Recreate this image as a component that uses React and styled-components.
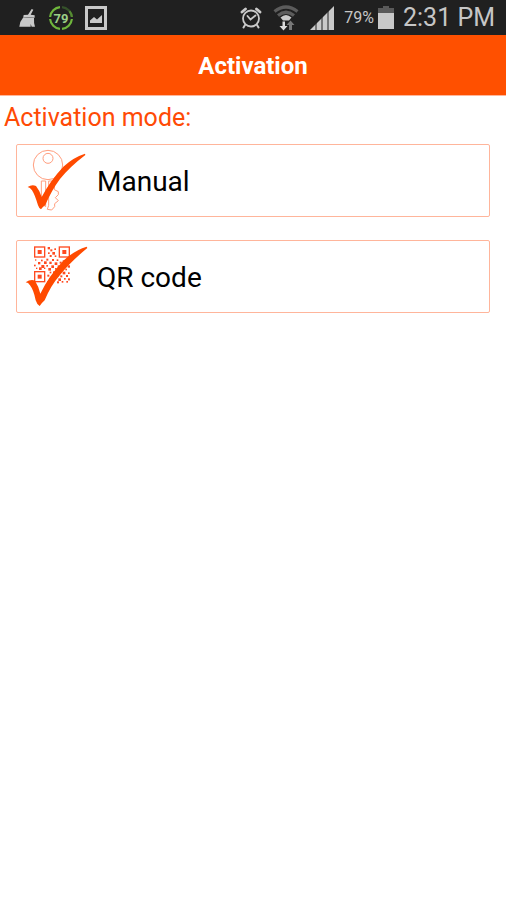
import React from 'react'
import styled, { createGlobalStyle } from 'styled-components'

const GlobalStyle = createGlobalStyle`
body {
    margin: 0;
    background-color: #fff;
    font-family: Roboto, "Noto Sans", sans-serif;
}
`

const StatusBar = styled.div`
    display: flex;
    justify-content: space-between;
    align-items: center;
    height: 35px;
    padding: 0 11px 0 19px;
    background-color: #202020;
    color: #c6c6c6;

    svg {
        display: block;
        flex: none;
    }
`

const StatusGroup = styled.div`
    display: flex;
    align-items: center;
    gap: ${props => props.$gap}px;
`

const Percent = styled.span`
    margin-left: 6px;
    font-size: 16px;
    line-height: 35px;
`

const Clock = styled.span`
    margin-left: 5px;
    font-size: 25px;
    line-height: 35px;
`

const Header = styled.header`
    display: flex;
    justify-content: center;
    align-items: center;
    height: 60px;
    background-color: #ff5000;
    border-bottom: 1px solid #ffb69a;

    h1 {
        margin: 0;
        padding-top: 2px;
        color: #fff;
        font-size: 24px;
        line-height: 28px;
        font-weight: 700;
    }
`

const ModeTitle = styled.h2`
    margin: 0;
    padding: 4px;
    color: #ff4a05;
    font-size: 25px;
    line-height: 36px;
    font-weight: 400;
`

const ModeList = styled.div`
    display: flex;
    flex-direction: column;
    gap: 23px;
    padding: 4px 16px;
`

const ModeButton = styled.button`
    display: flex;
    align-items: center;
    gap: 8px;
    width: 100%;
    height: 73px;
    padding: 0 8px;
    border: 1px solid #ffb59b;
    border-radius: 2px;
    background-color: #fff;
    color: #000;
    font-family: inherit;
    font-size: 28px;
    line-height: 36px;
    text-align: left;
    cursor: pointer;

    svg {
        flex: none;
    }
`

const ModeLabel = styled.span`
    padding-top: 2px;
`

const BroomIcon = () => (
    <svg width='18' height='18' viewBox='0 0 54 54' fill='#c9c9c9'>
        <path d='M38 0 L43 2 L35 17 L47 19 L47 26 L13 24 L14 18 L27 17 Z' />
        <path d='M13 25 L45 27 Q44 42 48 53 L38 53 L35 45 L35 53 L1 53 Q2 38 13 25 Z' />
    </svg>
)

const BatteryRing = () => (
    <svg width='26' height='26' viewBox='0 0 26 26'>
        <g fill='none' strokeWidth='2.2'>
            <path d='M12 2.1 A11 11 0 0 0 2.1 12' stroke='#6fb63c' />
            <path d='M2.1 14 A11 11 0 0 0 12 23.9' stroke='#6fb63c' />
            <path d='M14 23.9 A11 11 0 0 0 23.9 14' stroke='#6fb63c' />
            <path d='M14 2.1 A11 11 0 0 1 23.9 12' stroke='#35512a' />
            <path d='M21.5 6.1 A11 11 0 0 1 23.9 12' stroke='#568c32' />
        </g>
        <text x='13' y='18' textAnchor='middle' fill='#9bcf86' fontFamily='Roboto, sans-serif' fontSize='13' fontWeight='700'>79</text>
    </svg>
)

const PictureIcon = () => (
    <svg width='22' height='24' viewBox='0 0 22 24'>
        <rect x='1.5' y='1.5' width='19' height='21' fill='none' stroke='#c9c9c9' strokeWidth='3' />
        <path d='M5 17 V14.5 L9 11 L12 13.5 L17 9 V17 Z' fill='#c9c9c9' />
    </svg>
)

const AlarmIcon = () => (
    <svg width='22' height='22' viewBox='0 0 22 22' fill='none' stroke='#c9c9c9' strokeLinecap='round'>
        <circle cx='11' cy='11.5' r='8' strokeWidth='1.8' />
        <path d='M7.5 9 L10.5 12.5 L15.5 8.5' strokeWidth='1.8' />
        <path d='M2 5 L5.5 2 M20 5 L16.5 2' strokeWidth='2.8' />
        <path d='M5 18 L3.5 20.5 M17 18 L18.5 20.5' strokeWidth='2' />
    </svg>
)

const WifiIcon = () => (
    <svg width='26' height='26' viewBox='0 0 26 26'>
        <g fill='none' stroke='#5c5c5c' strokeWidth='3.2'>
            <path d='M1.5 6.5 Q13 -2.5 24.5 6.5' />
            <path d='M5 10.5 Q13 4 21 10.5' />
        </g>
        <path d='M7.5 12.5 Q13 7.5 18.5 12.5 L16 15.5 H10 Z' fill='#c9c9c9' />
        <path d='M9.5 16.5 H12 V21 H14.5 L10.5 25.5 L6.5 21 H9.5 Z' fill='#dcdcdc' />
        <path d='M16 25 V20 H13.5 L17.5 15.5 L21.5 20 H19 V25 Z' fill='#777' />
    </svg>
)

const SignalIcon = () => (
    <svg width='24' height='24' viewBox='0 0 24 24'>
        <path d='M0 24 L24 0 V24 Z' fill='#c9c9c9' />
        <path d='M6 10 V24 M12 4 V24 M18 0 V24' stroke='#202020' strokeWidth='1' />
    </svg>
)

const BatteryIcon = () => (
    <svg width='16' height='23' viewBox='0 0 16 23'>
        <path d='M5 0 H11 V2 H16 V7 H0 V2 H5 Z' fill='#5a5a5a' />
        <rect y='7' width='16' height='16' fill='#c9c9c9' />
    </svg>
)

const KeyIcon = () => (
    <svg width='64' height='64' viewBox='45 27 192 192'>
        <g fill='none' stroke='#ff9d7d' strokeWidth='3'>
            <circle cx='114' cy='75' r='44' />
            <circle cx='114' cy='55' r='15' />
            <path d='M94 123 H107 V200 L94 190 Z' />
            <path d='M116 123 H133 V149 L145 155 V164 L136 173 L145 182 L134 191 V200 L125 210 L112 208 L116 196 Z' />
        </g>
        <path d='M53 141 Q66 132 78 138 Q88 150 95 171 Q120 123 160 80 Q190 52 225 41 L226 45 Q180 80 150 117 Q124 152 106 195 Q98 200 93 208 Q87 205 84 196 Q75 165 66 151 Q60 142 53 141 Z' fill='#ff4a00' />
    </svg>
)

// filled cells of the code, as [x, y, size]
const qrCells = [
    [113, 36, 7], [133, 40, 5], [121, 43, 6], [114, 52, 5], [127, 51, 8], [119, 60, 6], [134, 61, 5],
    [75, 73, 4], [93, 74, 5], [109, 71, 6], [126, 72, 6], [140, 73, 5], [158, 76, 5], [174, 72, 5],
    [84, 81, 7], [102, 79, 8], [118, 80, 7], [134, 82, 8], [149, 80, 6], [164, 82, 6],
    [72, 89, 5], [94, 90, 9], [109, 90, 5], [124, 91, 8], [143, 91, 6], [155, 91, 7], [173, 91, 7],
    [78, 98, 4], [87, 97, 8], [102, 98, 4], [115, 99, 8], [135, 99, 5], [149, 100, 7], [166, 101, 5],
    [119, 110, 5], [129, 109, 7], [142, 110, 5], [158, 110, 8], [174, 112, 5],
    [112, 119, 6], [126, 120, 5], [137, 118, 8], [151, 121, 6], [168, 120, 6],
    [118, 129, 7], [132, 130, 4], [145, 130, 8], [162, 129, 5], [174, 130, 6],
    [112, 138, 4], [141, 139, 6], [155, 138, 5], [169, 138, 5]
]

const QrIcon = () => (
    <svg width='64' height='64' viewBox='45 30 192 192'>
        <g fill='none' stroke='#ff4a20' strokeWidth='4'>
            <rect x='74' y='36' width='30' height='30' />
            <rect x='148' y='36' width='30' height='30' />
            <rect x='74' y='110' width='30' height='30' />
        </g>
        <g fill='#ff4a20'>
            <rect x='83' y='45' width='12' height='12' />
            <rect x='157' y='45' width='12' height='12' />
            <rect x='83' y='119' width='12' height='12' />
            {qrCells.map(([x, y, size]) => (
                <rect key={`${x}-${y}`} x={x} y={y} width={size} height={size} />
            ))}
        </g>
        <path d='M47 142 Q62 132 75 137 Q85 152 91 176 Q116 123 160 77 Q195 45 230 35 L232 39 Q182 80 150 120 Q122 152 104 196 Q95 204 89 213 Q81 209 77 196 Q71 165 60 151 Q55 142 47 142 Z' fill='#ff4a00' />
    </svg>
)

const App = () => {
    return (
        <>
            <GlobalStyle />
            <StatusBar>
                <StatusGroup $gap={11}>
                    <BroomIcon />
                    <BatteryRing />
                    <PictureIcon />
                </StatusGroup>
                <StatusGroup $gap={4}>
                    <StatusGroup $gap={11}>
                        <AlarmIcon />
                        <WifiIcon />
                        <SignalIcon />
                    </StatusGroup>
                    <Percent>79%</Percent>
                    <BatteryIcon />
                    <Clock>2:31 PM</Clock>
                </StatusGroup>
            </StatusBar>
            <Header>
                <h1>Activation</h1>
            </Header>
            <main>
                <ModeTitle>Activation mode:</ModeTitle>
                <ModeList>
                    <ModeButton type='button'>
                        <KeyIcon />
                        <ModeLabel>Manual</ModeLabel>
                    </ModeButton>
                    <ModeButton type='button'>
                        <QrIcon />
                        <ModeLabel>QR code</ModeLabel>
                    </ModeButton>
                </ModeList>
            </main>
        </>
    )
}

export default App
